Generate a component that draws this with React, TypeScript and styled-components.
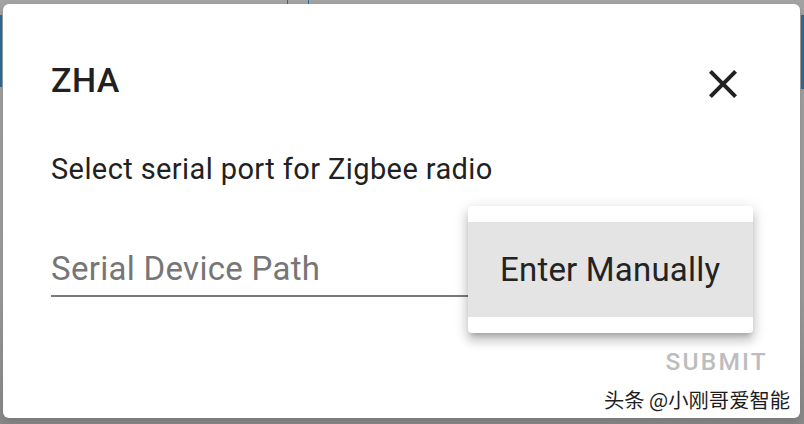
import React from "react";
import styled, { createGlobalStyle } from "styled-components";

const Global = createGlobalStyle`
  html, body { margin: 0; padding: 0; background: #9b9b9b; }
  body { font-family: Roboto, "Noto Sans", sans-serif; }
  * { box-sizing: border-box; }
`;

const Backdrop = styled.div`
  position: relative;
  width: 804px;
  height: 424px;
  overflow: hidden;
  background: linear-gradient(to bottom, #a3a3a3 0%, #9d9d9d 70%, #8a8a8a 100%);
  padding: 4px 4px 6px 3px;
  display: flex;
`;

const BgStrip = styled.div<{ $left?: number; $right?: number; $top: number; $h: number; $w: number }>`
  position: absolute;
  ${(p) => (p.$left !== undefined ? `left: ${p.$left}px;` : "")}
  ${(p) => (p.$right !== undefined ? `right: ${p.$right}px;` : "")}
  top: ${(p) => p.$top}px;
  width: ${(p) => p.$w}px;
  height: ${(p) => p.$h}px;
  background: #2f6b9a;
`;

const Dialog = styled.div`
  position: relative;
  flex: 1;
  background: #fff;
  border-radius: 6px;
  display: flex;
  flex-direction: column;
  padding: 56px 32px 0 48px;
  box-shadow: 0 4px 10px rgba(0, 0, 0, 0.15);
`;

const Header = styled.div`
  display: flex;
  align-items: center;
  justify-content: space-between;
  height: 40px;
`;

const Title = styled.h2`
  margin: 0;
  font-family: Roboto, sans-serif;
  font-weight: 500;
  font-size: 34px;
  line-height: 40px;
  letter-spacing: 0.4px;
  color: #212121;
`;

const CloseButton = styled.button`
  border: none;
  background: transparent;
  padding: 0;
  width: 48px;
  height: 48px;
  margin-right: 21px;
  margin-top: 8px;
  display: flex;
  align-items: center;
  justify-content: center;
  color: #212121;
`;

const Message = styled.p`
  margin: 53px 0 0 0;
  font-size: 29px;
  line-height: 32px;
  color: #212121;
  letter-spacing: 0.4px;
`;

const FieldRow = styled.div`
  position: relative;
  margin-top: 66px;
  margin-right: 15px;
`;

const Field = styled.div`
  height: 46px;
  border-bottom: 2px solid #7b7b7b;
  display: flex;
  align-items: flex-start;
`;

const Placeholder = styled.span`
  font-size: 33px;
  line-height: 36px;
  color: #767676;
  letter-spacing: 0.3px;
`;

const Menu = styled.div`
  position: absolute;
  right: 0;
  top: -45px;
  width: 285px;
  background: #fff;
  border-radius: 4px;
  padding: 16px 0;
  box-shadow: 0 5px 5px -3px rgba(0, 0, 0, 0.2), 0 8px 10px 1px rgba(0, 0, 0, 0.14),
    0 3px 14px 2px rgba(0, 0, 0, 0.12);
`;

const MenuItem = styled.div`
  height: 95px;
  background: #e4e4e4;
  display: flex;
  align-items: center;
  padding-left: 32px;
  font-size: 33px;
  color: #232323;
  letter-spacing: 0.2px;
`;

const Actions = styled.div`
  display: flex;
  justify-content: flex-end;
  margin-top: 51px;
`;

const Submit = styled.button`
  border: none;
  background: transparent;
  padding: 0;
  font-family: Roboto, sans-serif;
  font-weight: 500;
  font-size: 24.5px;
  line-height: 28px;
  letter-spacing: 2.2px;
  color: #bdbdbd;
`;

const Watermark = styled.div`
  position: absolute;
  right: 10px;
  bottom: 6px;
  font-family: "Noto Sans CJK SC", sans-serif;
  font-size: 20.3px;
  line-height: 26px;
  color: #1e1e1e;
  text-shadow: 0 0 2px #fff, 1px 1px 0 #fff, -1px -1px 0 #fff, 1px -1px 0 #fff, -1px 1px 0 #fff;
`;

export default function App() {
  return (
    <>
      <Global />
      <Backdrop>
        <BgStrip $left={0} $top={15} $h={72} $w={2} />
        <BgStrip $right={0} $top={15} $h={74} $w={3} />
        <BgStrip $left={287} $top={0} $h={4} $w={1} />
        <BgStrip $left={308} $top={0} $h={4} $w={1} />
        <Dialog>
          <Header>
            <Title>ZHA</Title>
            <CloseButton aria-label="close">
              <svg width="48" height="48" viewBox="0 0 24 24">
                <path
                  fill="currentColor"
                  d="M19,6.41L17.59,5L12,10.59L6.41,5L5,6.41L10.59,12L5,17.59L6.41,19L12,13.41L17.59,19L19,17.59L13.41,12L19,6.41Z"
                />
              </svg>
            </CloseButton>
          </Header>
          <Message>Select serial port for Zigbee radio</Message>
          <FieldRow>
            <Field>
              <Placeholder>Serial Device Path</Placeholder>
            </Field>
            <Menu>
              <MenuItem>Enter Manually</MenuItem>
            </Menu>
          </FieldRow>
          <Actions>
            <Submit>SUBMIT</Submit>
          </Actions>
          <Watermark>头条 @小刚哥爱智能</Watermark>
        </Dialog>
      </Backdrop>
    </>
  );
}
